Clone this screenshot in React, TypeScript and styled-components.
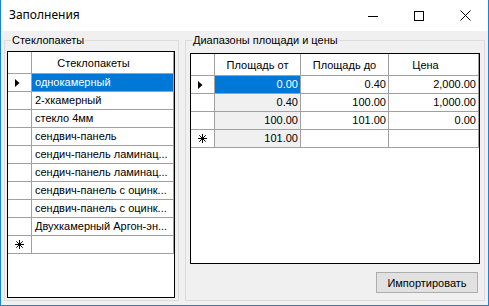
import * as React from 'react'
import styled, { createGlobalStyle } from 'styled-components'

const lineColor = '#a0a0a0'
const uiFont = `"Liberation Sans", Arial, sans-serif`

const Global = createGlobalStyle`
    html, body {
        margin: 0;
        padding: 0;
        background: #ffffff;
    }
    * {
        box-sizing: border-box;
    }
`

const Window = styled.div`
    width: 489px;
    height: 306px;
    display: flex;
    flex-direction: column;
    border: 1px solid #1883d7;
    border-top: none;
    background: #f0f0f0;
    font-family: ${uiFont};
    font-size: 11px;
    color: #000;
    overflow: hidden;
`
const TitleBar = styled.div`
    height: 31px;
    flex: none;
    display: flex;
    align-items: center;
    background: #ffffff;
`
const Title = styled.div`
    flex: 1;
    padding-left: 8px;
    font-family: "Noto Sans", "Open Sans", sans-serif;
    font-size: 12px;
    line-height: 16px;
    margin-top: -1px;
`
const CaptionButton = styled.div`
    width: 46px;
    height: 31px;
    display: flex;
    align-items: center;
    justify-content: center;
`
const Content = styled.div`
    flex: 1;
    display: flex;
    gap: 6px;
    padding: 3px 3px 4px 3px;
`
const GroupBox = styled.fieldset<{ $width: number }>`
    width: ${(p) => p.$width}px;
    margin: 0;
    padding: 0;
    border: 1px solid #dcdcdc;
    min-width: 0;
`
const Legend = styled.legend`
    margin-left: 6px;
    padding: 0 1px;
    font-size: 11px;
    line-height: 13px;
`
const GroupBody = styled.div<{ $pad: string }>`
    display: flex;
    flex-direction: column;
    padding: ${(p) => p.$pad};
`
const Grid = styled.div<{ $cols: string; $height: number }>`
    display: grid;
    grid-template-columns: ${(p) => p.$cols};
    grid-template-rows: 22px;
    grid-auto-rows: 18px;
    align-content: start;
    height: ${(p) => p.$height}px;
    border: 1px solid #000;
    background: #ffffff;
    overflow: hidden;
`
const HeaderCell = styled.div<{ $shift?: number }>`
    display: flex;
    align-items: center;
    justify-content: center;
    padding-right: ${(p) => p.$shift ?? 0}px;
    border-right: 1px solid ${lineColor};
    border-bottom: 1px solid ${lineColor};
    background: #ffffff;
    white-space: nowrap;
`
const RowHeader = styled.div`
    display: flex;
    align-items: center;
    padding-left: 7px;
    border-right: 1px solid ${lineColor};
    border-bottom: 1px solid ${lineColor};
    background: #ffffff;
`
const Cell = styled.div<{ $right?: boolean; $selected?: boolean; $readonly?: boolean }>`
    display: flex;
    align-items: center;
    justify-content: ${(p) => (p.$right ? 'flex-end' : 'flex-start')};
    padding: 0 ${(p) => (p.$right ? '2px' : '3px')} 0 3px;
    line-height: 17px;
    border-right: 1px solid ${lineColor};
    border-bottom: 1px solid ${lineColor};
    background: ${(p) => (p.$selected ? '#0078d7' : p.$readonly ? '#f0f0f0' : '#ffffff')};
    color: ${(p) => (p.$selected ? '#ffffff' : '#000000')};
    white-space: nowrap;
    overflow: hidden;
`
const Button = styled.div`
    align-self: flex-end;
    width: 102px;
    height: 21px;
    margin-top: 8px;
    margin-right: 2px;
    display: flex;
    align-items: center;
    justify-content: center;
    background: #e1e1e1;
    border: 1px solid #adadad;
`

const Arrow = () => (
    <svg width="5" height="8" viewBox="0 0 5 8">
        <polygon points="0,0 4.5,4 0,8" fill="#000" />
    </svg>
)

const NewRowMark = () => (
    <svg width="9" height="9" viewBox="0 0 9 9" stroke="#000" strokeWidth="1">
        <line x1="4.5" y1="0" x2="4.5" y2="9" />
        <line x1="0" y1="4.5" x2="9" y2="4.5" />
        <line x1="1.3" y1="1.3" x2="7.7" y2="7.7" />
        <line x1="7.7" y1="1.3" x2="1.3" y2="7.7" />
    </svg>
)

const glass = [
    'однокамерный',
    '2-хкамерный',
    'стекло 4мм',
    'сендвич-панель',
    'сендич-панель ламинац...',
    'сендич-панель ламинац...',
    'сендвич-панель с оцинк...',
    'сендвич-панель с оцинк...',
    'Двухкамерный Аргон-эн...',
]

const ranges = [
    ['0.00', '0.40', '2,000.00'],
    ['0.40', '100.00', '1,000.00'],
    ['100.00', '101.00', '0.00'],
]

export default function App() {
    return (
        <>
            <Global />
            <Window>
                <TitleBar>
                    <Title>Заполнения</Title>
                    <CaptionButton>
                        <svg width="10" height="10" viewBox="0 0 10 10">
                            <line x1="0" y1="5.5" x2="10" y2="5.5" stroke="#000" />
                        </svg>
                    </CaptionButton>
                    <CaptionButton>
                        <svg width="10" height="10" viewBox="0 0 10 10">
                            <rect x="0.5" y="0.5" width="9" height="9" fill="none" stroke="#000" />
                        </svg>
                    </CaptionButton>
                    <CaptionButton>
                        <svg width="11" height="11" viewBox="0 0 11 11">
                            <path d="M0.5 0.5 L10.5 10.5 M10.5 0.5 L0.5 10.5" stroke="#000" strokeWidth="1" />
                        </svg>
                    </CaptionButton>
                </TitleBar>
                <Content>
                    <GroupBox $width={175}>
                        <Legend>Стеклопакеты</Legend>
                        <GroupBody $pad="4px 3px 2px 2px">
                            <Grid $cols="24px 142px" $height={247}>
                                <HeaderCell />
                                <HeaderCell $shift={18}>Стеклопакеты</HeaderCell>
                                {glass.map((name, i) => (
                                    <React.Fragment key={i}>
                                        <RowHeader>{i === 0 && <Arrow />}</RowHeader>
                                        <Cell $selected={i === 0}>{name}</Cell>
                                    </React.Fragment>
                                ))}
                                <RowHeader>
                                    <NewRowMark />
                                </RowHeader>
                                <Cell />
                            </Grid>
                        </GroupBody>
                    </GroupBox>
                    <GroupBox $width={300}>
                        <Legend>Диапазоны площади и цены</Legend>
                        <GroupBody $pad="6px 4px 0 4px">
                            <Grid $cols="24px 86px 88px 90px" $height={211}>
                                <HeaderCell />
                                <HeaderCell $shift={0}>Площадь от</HeaderCell>
                                <HeaderCell $shift={0}>Площадь до</HeaderCell>
                                <HeaderCell $shift={16}>Цена</HeaderCell>
                                {ranges.map((r, i) => (
                                    <React.Fragment key={i}>
                                        <RowHeader>{i === 0 && <Arrow />}</RowHeader>
                                        <Cell $right $selected={i === 0} $readonly>
                                            {r[0]}
                                        </Cell>
                                        <Cell $right>{r[1]}</Cell>
                                        <Cell $right>{r[2]}</Cell>
                                    </React.Fragment>
                                ))}
                                <RowHeader>
                                    <NewRowMark />
                                </RowHeader>
                                <Cell $right $readonly>
                                    101.00
                                </Cell>
                                <Cell />
                                <Cell />
                            </Grid>
                            <Button>Импортировать</Button>
                        </GroupBody>
                    </GroupBox>
                </Content>
            </Window>
        </>
    )
}
